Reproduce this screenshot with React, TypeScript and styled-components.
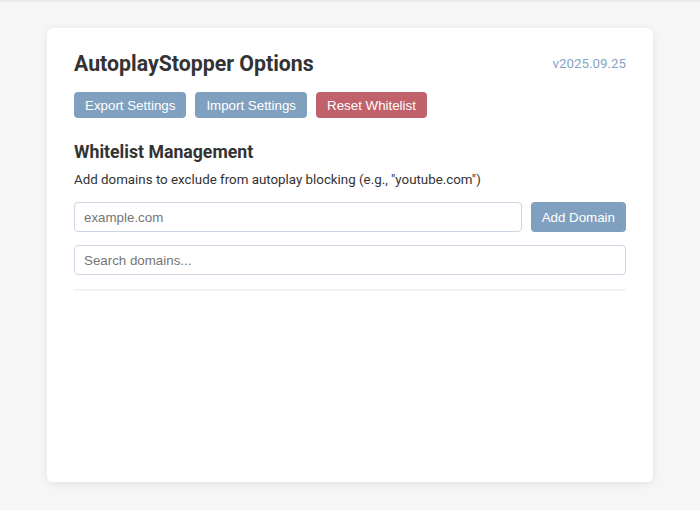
import styled, { createGlobalStyle } from "styled-components";

const GlobalStyle = createGlobalStyle`
  html, body {
    margin: 0;
    padding: 0;
    background: #f6f6f6;
    font-family: Roboto, "Liberation Sans", sans-serif;
    font-size: 13.33px;
    color: #333;
  }
  * { box-sizing: border-box; }
`;

const Page = styled.div`
  min-height: 510px;
  border-top: 2px solid #ececec;
  padding: 26px 47px 28px;
`;

const Card = styled.main`
  background: #fff;
  border-radius: 6px;
  box-shadow: 0 2px 8px rgba(0, 0, 0, 0.08);
  padding: 23px 27px;
  min-height: 454px;
`;

const Header = styled.header`
  display: flex;
  justify-content: space-between;
  align-items: center;
  margin-bottom: 16px;
`;

const Title = styled.h1`
  margin: 0;
  font-size: 21.3px;
  font-weight: 700;
  color: #333;
`;

const Version = styled.span`
  font-size: 13.33px;
  color: #85a5c6;
`;

const Toolbar = styled.div`
  display: flex;
  gap: 9px;
  margin-bottom: 24px;
`;

const Button = styled.button<{ $danger?: boolean }>`
  border: 0;
  border-radius: 4px;
  height: 26px;
  padding: 0 11px;
  font-family: "Liberation Sans", Arial, sans-serif;
  font-size: 13.33px;
  color: #fff;
  background: ${(p) => (p.$danger ? "#c0616b" : "#7fa1bf")};
  cursor: pointer;
`;

const SectionTitle = styled.h2`
  margin: 0 0 10px;
  font-size: 17.7px;
  font-weight: 700;
  color: #333;
`;

const Hint = styled.p`
  margin: 0 0 15px;
  font-size: 13.33px;
  color: #333;
`;

const AddRow = styled.div`
  display: flex;
  gap: 9px;
  margin-bottom: 13px;
`;

const Input = styled.input`
  flex: 1;
  height: 30px;
  border: 1px solid #cdd7e3;
  border-radius: 4px;
  padding: 0 9px;
  font-family: "Liberation Sans", Arial, sans-serif;
  font-size: 13.33px;
  color: #333;
  outline: none;
  &::placeholder { color: #757575; }
`;

const AddButton = styled(Button)`
  height: 30px;
`;

const SearchInput = styled(Input)`
  width: 100%;
  display: block;
`;

const Divider = styled.div`
  margin-top: 14px;
  height: 2px;
  background: #f3f3f3;
`;

export default function App() {
  return (
    <>
      <GlobalStyle />
      <Page>
        <Card>
          <Header>
            <Title>AutoplayStopper Options</Title>
            <Version>v2025.09.25</Version>
          </Header>
          <Toolbar>
            <Button>Export Settings</Button>
            <Button>Import Settings</Button>
            <Button $danger>Reset Whitelist</Button>
          </Toolbar>
          <SectionTitle>Whitelist Management</SectionTitle>
          <Hint>Add domains to exclude from autoplay blocking (e.g., "youtube.com")</Hint>
          <AddRow>
            <Input placeholder="example.com" />
            <AddButton>Add Domain</AddButton>
          </AddRow>
          <SearchInput placeholder="Search domains..." />
          <Divider />
        </Card>
      </Page>
    </>
  );
}
